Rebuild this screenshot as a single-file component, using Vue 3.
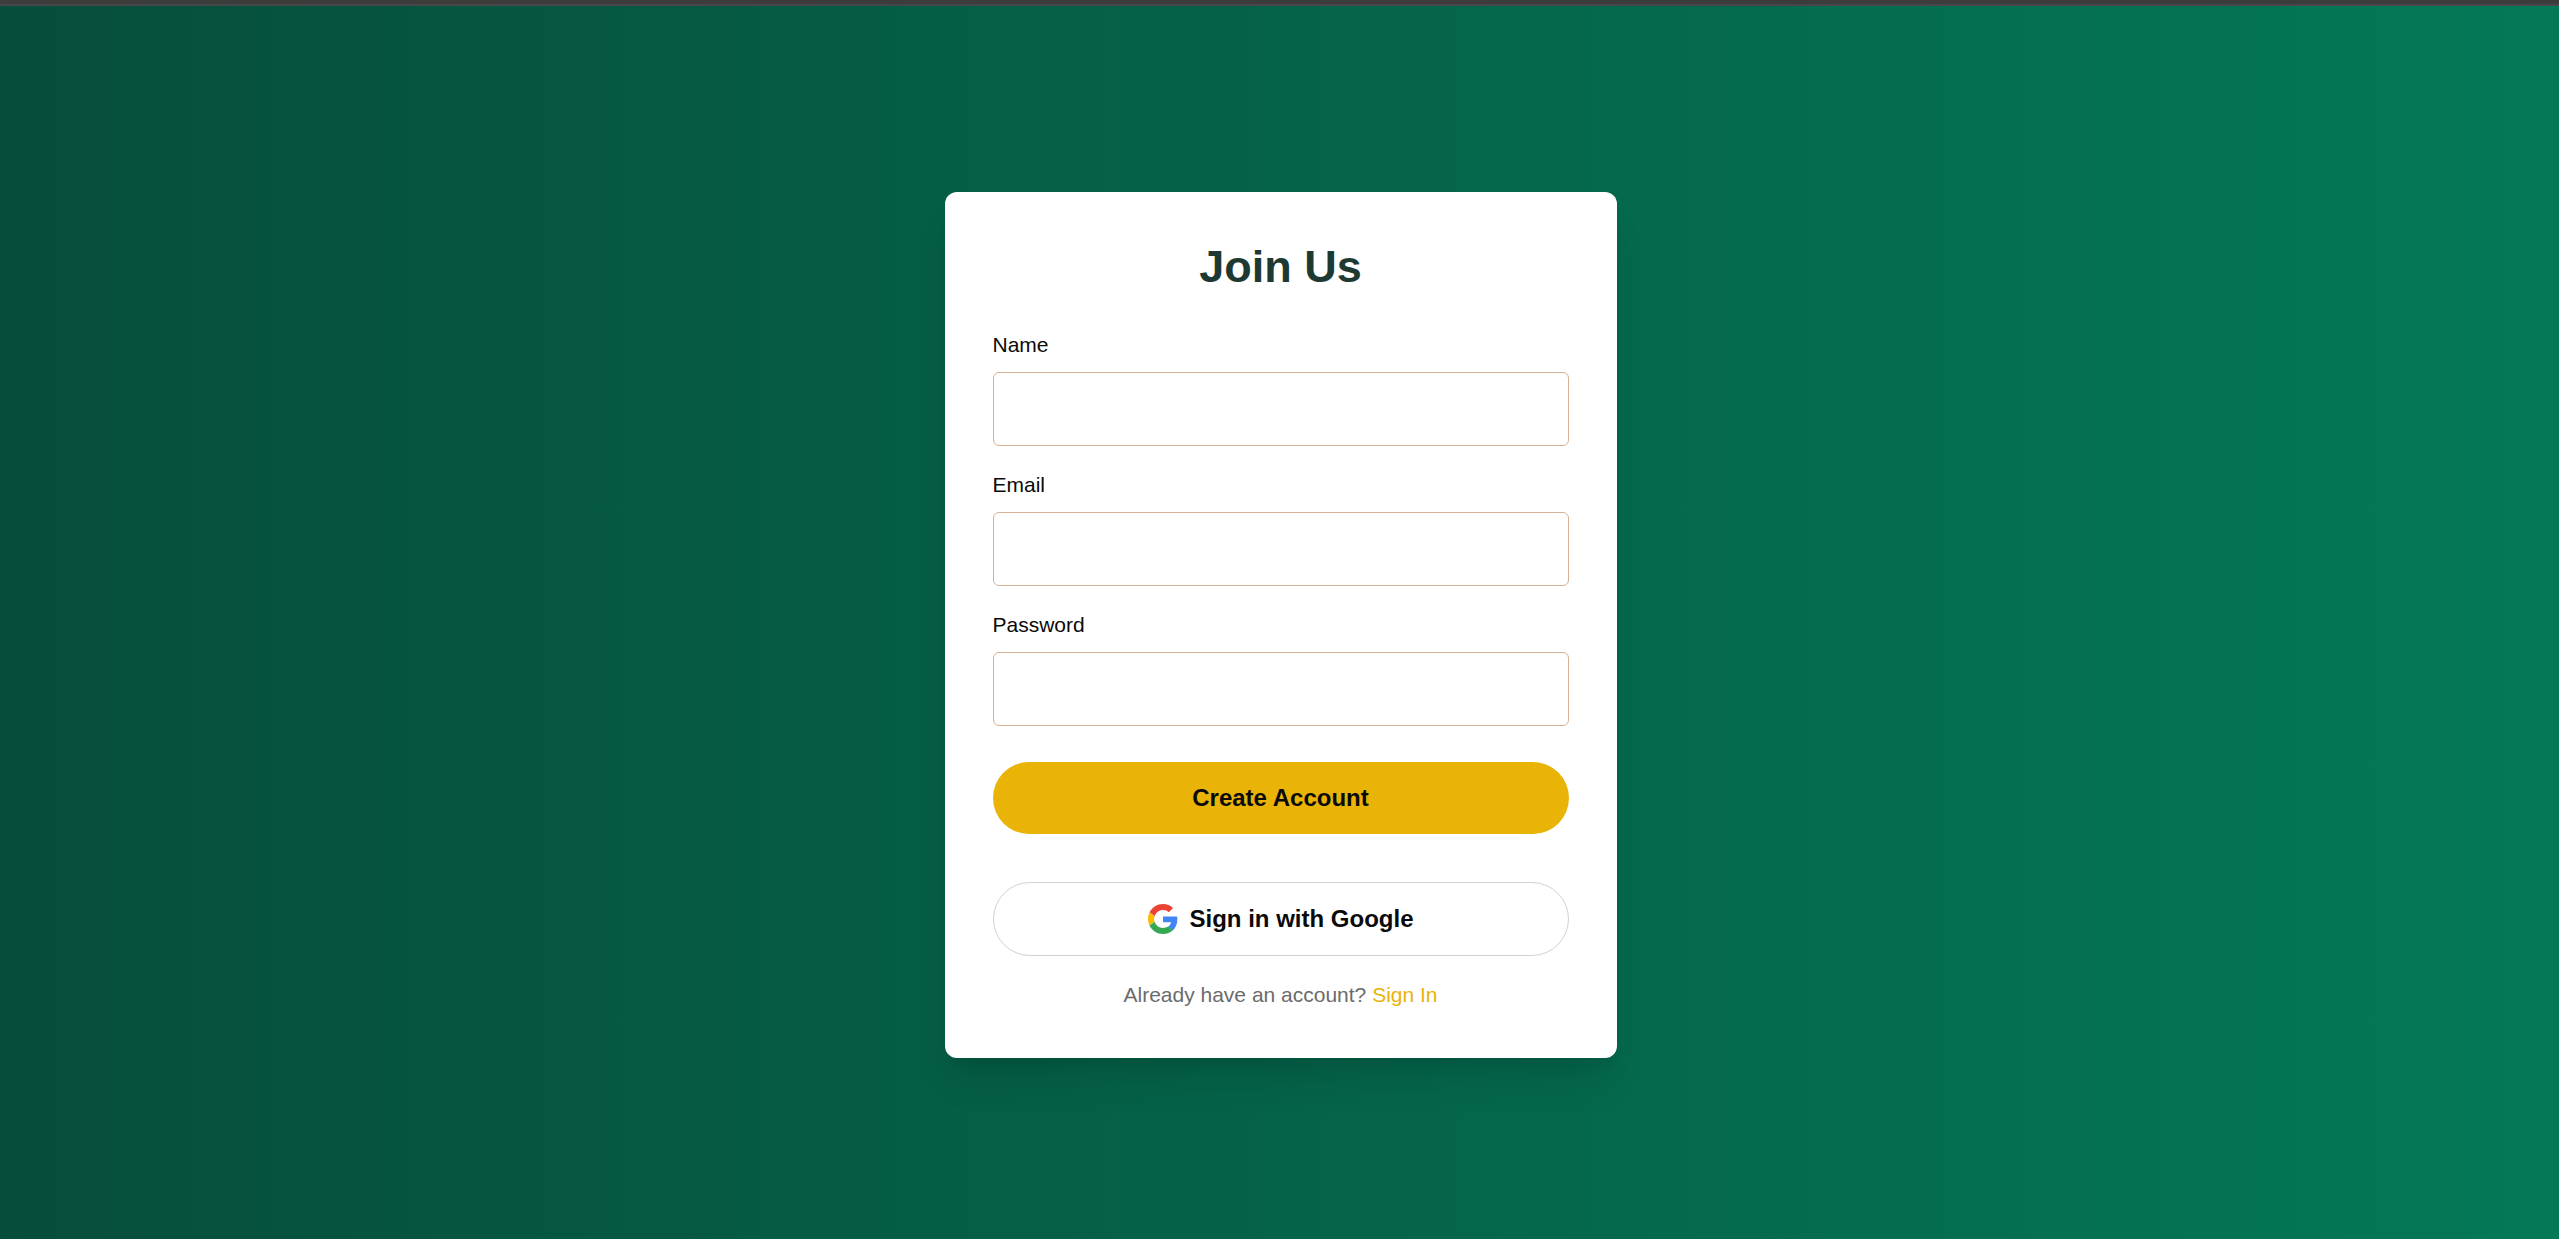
<script setup>
import { reactive } from 'vue'

const form = reactive({ name: '', email: '', password: '' })

const fields = [
  { key: 'name', label: 'Name', type: 'text' },
  { key: 'email', label: 'Email', type: 'email' },
  { key: 'password', label: 'Password', type: 'password' },
]
</script>

<template>
  <div class="page">
    <div class="topbar"></div>
    <main class="stage">
      <section class="card">
        <h1 class="title">Join Us</h1>
        <form class="form" @submit.prevent>
          <div v-for="field in fields" :key="field.key" class="field">
            <label :for="field.key">{{ field.label }}</label>
            <input :id="field.key" v-model="form[field.key]" :type="field.type" />
          </div>
          <button class="btn primary" type="submit">Create Account</button>
        </form>
        <button class="btn google" type="button">
          <svg viewBox="0 0 48 48" aria-hidden="true">
            <path fill="#EA4335" d="M24 9.5c3.54 0 6.71 1.22 9.21 3.6l6.85-6.85C35.9 2.38 30.47 0 24 0 14.62 0 6.51 5.38 2.56 13.22l7.98 6.19C12.43 13.72 17.74 9.5 24 9.5z" />
            <path fill="#4285F4" d="M46.98 24.55c0-1.57-.15-3.09-.38-4.55H24v9.02h12.94c-.58 2.96-2.26 5.48-4.78 7.18l7.73 6c4.51-4.18 7.09-10.36 7.09-17.65z" />
            <path fill="#FBBC05" d="M10.53 28.59c-.48-1.45-.76-2.99-.76-4.59s.27-3.14.76-4.59l-7.98-6.19C.92 16.46 0 20.12 0 24c0 3.88.92 7.54 2.56 10.78l7.97-6.19z" />
            <path fill="#34A853" d="M24 48c6.48 0 11.93-2.13 15.89-5.81l-7.73-6c-2.15 1.45-4.92 2.3-8.16 2.3-6.26 0-11.57-4.22-13.47-9.91l-7.98 6.19C6.51 42.62 14.62 48 24 48z" />
          </svg>
          <span>Sign in with Google</span>
        </button>
        <p class="footnote">Already have an account? <a href="#signin">Sign In</a></p>
      </section>
    </main>
  </div>
</template>

<style>
body {
  margin: 0;
}
</style>

<style scoped>
.page {
  display: flex;
  flex-direction: column;
  min-height: 100vh;
  font-family: "Liberation Sans", Arial, sans-serif;
  font-size: 21px;
  line-height: 30px;
  color: #0a0a0a;
}

.topbar {
  height: 4px;
  background: #3c3c3c;
  border-bottom: 2px solid #474747;
}

.stage {
  flex: 1;
  display: flex;
  align-items: center;
  justify-content: center;
  padding: 28px 24px 24px 26px;
  background: linear-gradient(to right, #064e3b, #047857);
}

.card {
  box-sizing: border-box;
  width: 100%;
  max-width: 672px;
  padding: 48px;
  border-radius: 12px;
  background: #fff;
  box-shadow: 0 30px 38px -8px rgba(0, 0, 0, 0.1), 0 12px 15px -9px rgba(0, 0, 0, 0.1);
}

.title {
  margin: 0 0 36px;
  font-size: 45px;
  line-height: 54px;
  font-weight: 700;
  text-align: center;
  color: #1e3932;
}

.form {
  display: flex;
  flex-direction: column;
  gap: 24px;
}

.field {
  display: flex;
  flex-direction: column;
  gap: 12px;
}

.field input {
  box-sizing: border-box;
  width: 100%;
  height: 74px;
  padding: 0 18px;
  border: 1px solid #d4b096;
  border-radius: 6px;
  background: #fff;
  font: inherit;
  color: inherit;
}

.btn {
  box-sizing: border-box;
  display: flex;
  align-items: center;
  justify-content: center;
  gap: 12px;
  width: 100%;
  padding: 18px 24px;
  border: 0;
  border-radius: 999px;
  font-family: inherit;
  font-size: 24px;
  line-height: 36px;
  font-weight: 700;
  color: #0a0a0a;
  cursor: pointer;
}

.primary {
  margin-top: 12px;
  background: #eab308;
}

.google {
  margin-top: 48px;
  border: 1px solid #d1d1d8;
  background: #fff;
}

.google svg {
  width: 30px;
  height: 30px;
}

.footnote {
  margin: 24px 0 0;
  text-align: center;
  color: #6b6b6b;
}

.footnote a {
  color: #eab308;
  text-decoration: none;
}
</style>
